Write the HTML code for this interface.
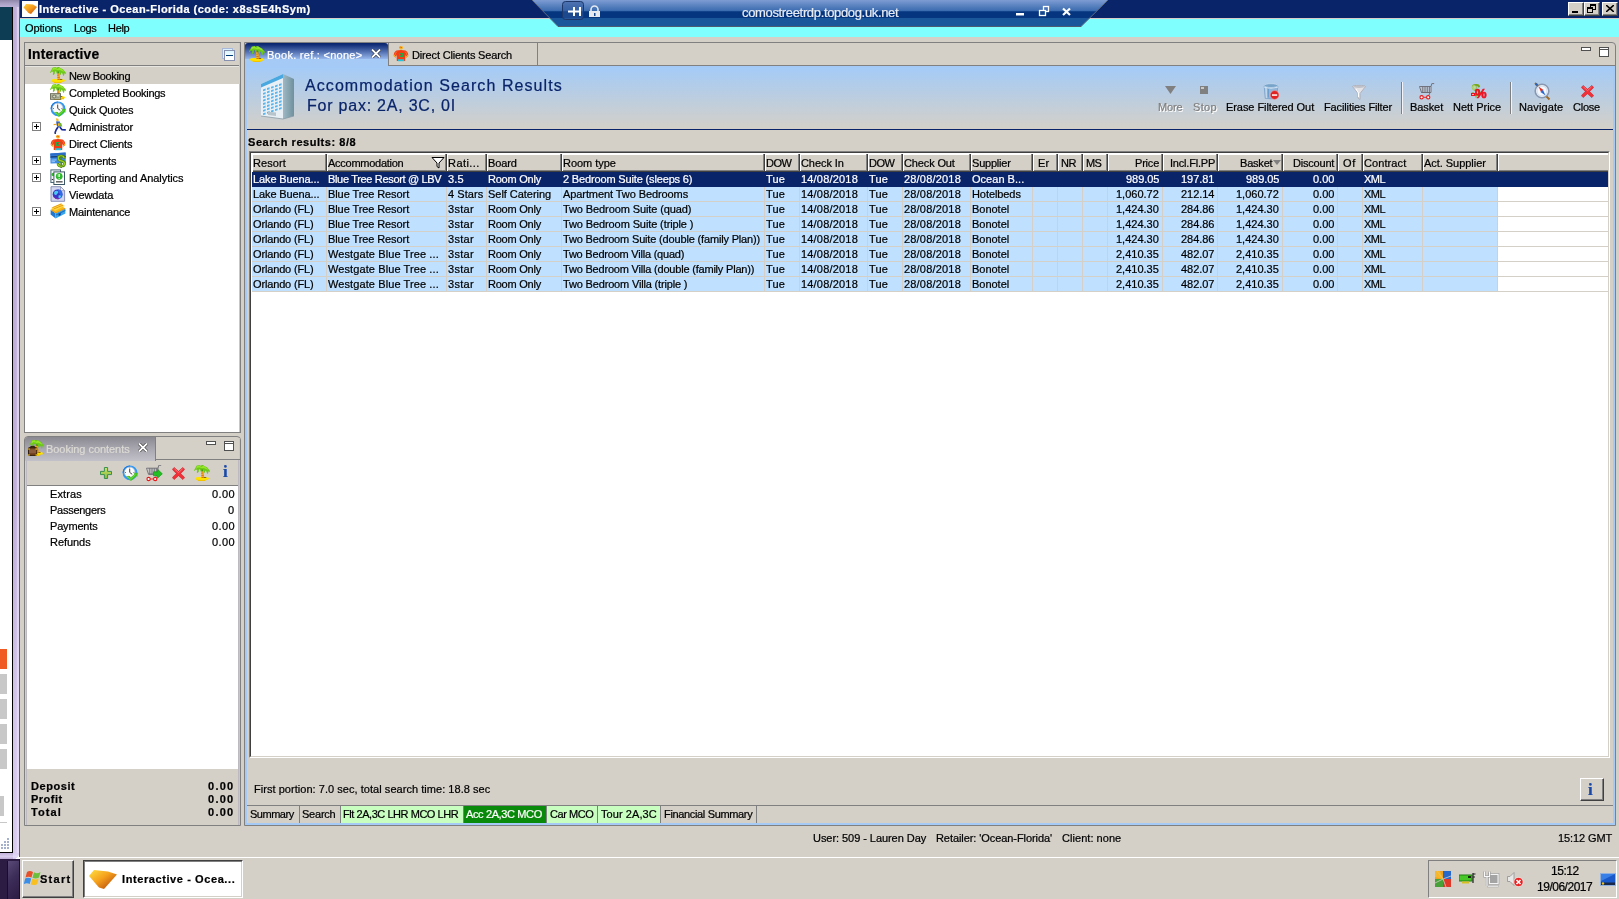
<!DOCTYPE html>
<html><head><meta charset="utf-8"><title>Interactive - Ocean-Florida</title>
<style>
html,body{margin:0;padding:0;}
body{width:1619px;height:899px;overflow:hidden;background:#d4d0c8;position:relative;font-family:"Liberation Sans",sans-serif;font-size:11px;color:#000;}
div,span.t,svg{position:absolute;box-sizing:border-box;}
span.t{white-space:pre;line-height:14px;font-size:11px;will-change:transform;-webkit-text-stroke:0.22px currentColor;}
.b{font-weight:bold;}
.w{color:#fff;}
</style></head><body>

<div style="left:0px;top:0px;width:20px;height:899px;background:#fff;"></div>
<div style="left:0px;top:7px;width:13px;height:33px;background:#0d3c55;"></div>
<div style="left:0px;top:6px;width:13px;height:1px;background:#000;"></div>
<div style="left:12px;top:6px;width:1px;height:847px;background:#000;"></div>
<div style="left:0px;top:852px;width:13px;height:1px;background:#000;"></div>
<div style="left:13px;top:0px;width:6px;height:859px;background:linear-gradient(90deg,#bdaad6 0%,#c3b2dc 55%,#e8e0f4 85%,#cfc2e4 100%);border-radius:0 0 6px 0;"></div>
<div style="left:0px;top:853px;width:19px;height:6px;background:linear-gradient(180deg,#c3b2dc,#d9cdee 60%,#bdaad6);border-radius:0 0 6px 0;"></div>
<div style="left:0px;top:0px;width:19px;height:7px;background:linear-gradient(180deg,#8f86a8,#a9a0c4 50%,#bdb0d6);"></div>
<div style="left:19px;top:0px;width:1px;height:857px;background:#5c5470;"></div>
<div style="left:0px;top:649px;width:7px;height:20px;background:#f05a23;"></div>
<div style="left:0px;top:674px;width:7px;height:20px;background:#c8c8c8;"></div>
<div style="left:0px;top:699px;width:7px;height:20px;background:#c8c8c8;"></div>
<div style="left:0px;top:724px;width:7px;height:20px;background:#c8c8c8;"></div>
<div style="left:0px;top:749px;width:7px;height:20px;background:#c8c8c8;"></div>
<div style="left:0px;top:796px;width:4px;height:20px;background:#c8c8c8;"></div>
<div style="left:7px;top:838px;width:2px;height:2px;background:#a4b0cc;"></div>
<div style="left:4px;top:841px;width:2px;height:2px;background:#a4b0cc;"></div>
<div style="left:7px;top:841px;width:2px;height:2px;background:#a4b0cc;"></div>
<div style="left:1px;top:844px;width:2px;height:2px;background:#a4b0cc;"></div>
<div style="left:4px;top:844px;width:2px;height:2px;background:#a4b0cc;"></div>
<div style="left:7px;top:844px;width:2px;height:2px;background:#a4b0cc;"></div>
<div style="left:1px;top:847px;width:2px;height:2px;background:#a4b0cc;"></div>
<div style="left:4px;top:847px;width:2px;height:2px;background:#a4b0cc;"></div>
<div style="left:7px;top:847px;width:2px;height:2px;background:#a4b0cc;"></div>
<div style="left:13px;top:500px;width:6px;height:359px;background:linear-gradient(180deg,rgba(255,255,255,0) 0%,rgba(236,226,255,0.450) 60%,rgba(236,226,255,0.550) 100%);border-radius:0 0 6px 0;"></div>
<div style="left:0px;top:822px;width:7px;height:1px;background:#c8c8c8;"></div>
<div style="left:20px;top:0px;width:1599px;height:18px;background:#0a246a;"></div>
<div style="left:22px;top:1px;width:16px;height:16px;background:#fff;"></div>
<svg style="left:22px;top:1px" width="16" height="16" viewBox="0 0 16 16"><defs><linearGradient id="gl" x1="0" y1="0" x2="1" y2="1"><stop offset="0" stop-color="#ffd23a"/><stop offset="0.5" stop-color="#f59a1c"/><stop offset="1" stop-color="#b8430c"/></linearGradient></defs><path d="M1.5 6.5 L4 3 L11 3.5 L15 6 L9 13 L6.5 12 Z" fill="url(#gl)"/></svg>
<span id="t1" class="t b w" style="top:2.19px;letter-spacing:0.457px;left:39.4px;">Interactive - Ocean-Florida (code: x8sSE4hSym)</span>
<div style="left:1568px;top:2px;width:16px;height:14px;background:#d4d0c8;border-top:1px solid #fff;border-left:1px solid #fff;border-right:1px solid #404040;border-bottom:1px solid #404040;box-shadow:inset -1px -1px 0 #808080;"><div style="left:3px;top:8px;width:6px;height:2px;background:#000"></div></div>
<div style="left:1584px;top:2px;width:16px;height:14px;background:#d4d0c8;border-top:1px solid #fff;border-left:1px solid #fff;border-right:1px solid #404040;border-bottom:1px solid #404040;box-shadow:inset -1px -1px 0 #808080;"><div style="left:5px;top:1px;width:6px;height:6px;border:1px solid #000;border-top-width:2px"></div><div style="left:2px;top:4px;width:6px;height:6px;border:1px solid #000;border-top-width:2px;background:#d4d0c8"></div></div>
<div style="left:1602px;top:2px;width:16px;height:14px;background:#d4d0c8;border-top:1px solid #fff;border-left:1px solid #fff;border-right:1px solid #404040;border-bottom:1px solid #404040;box-shadow:inset -1px -1px 0 #808080;"><svg style="left:3px;top:2px" width="8" height="7" viewBox="0 0 8 7"><path d="M0 0L8 7M8 0L0 7" stroke="#000" stroke-width="1.6"/></svg></div>
<div style="left:20px;top:18px;width:1599px;height:1px;background:#d8ccc8;"></div>
<div style="left:20px;top:19px;width:1599px;height:18px;background:#80ffff;"></div>
<span id="t2" class="t" style="top:21.19px;letter-spacing:-0.119px;left:25.4px;">Options</span>
<span id="t3" class="t" style="top:21.19px;letter-spacing:-0.388px;left:73.9px;">Logs</span>
<span id="t4" class="t" style="top:21.19px;letter-spacing:-0.309px;left:107.9px;">Help</span>
<svg style="left:528px;top:0" width="586" height="28" viewBox="0 0 586 28">
<defs><linearGradient id="rg" x1="0" y1="0" x2="0" y2="1">
<stop offset="0" stop-color="#7d9cd2"/><stop offset="0.40" stop-color="#3c6cb0"/><stop offset="0.445" stop-color="#06357f"/><stop offset="0.66" stop-color="#06357f"/><stop offset="0.68" stop-color="#19579a"/><stop offset="1" stop-color="#19579a"/></linearGradient></defs>
<path d="M4 0 L580 0 L553 26.5 L30 26.5 Z" fill="url(#rg)"/>
<path d="M4 0 L30 26.5 L553 26.5 L580 0" fill="none" stroke="#5a6a80" stroke-width="1"/>
<path d="M30 26.500 L553 26.500" stroke="#4e5c70" stroke-width="1"/>
<rect x="34.5" y="1.5" width="21" height="18" rx="3" fill="#30589a" fill-opacity="0.55" stroke="#1c3768"/>
<path d="M40 11.5 H46 M46 7 V16 M52 7 V16 M46 11.5 H52" stroke="#fff" stroke-width="2" fill="none"/>
<path d="M63 11 V9.500 a3.500 3.500 0 0 1 7 0 V11" stroke="#e6e8f0" stroke-width="1.600" fill="none"/>
<rect x="61" y="11" width="11" height="6" fill="#e6e8f0"/><rect x="66" y="13" width="1.500" height="3" fill="#1a4a90"/>
<rect x="488" y="13" width="8" height="2.5" fill="#fff"/>
<rect x="515.500" y="6.500" width="5" height="5" fill="none" stroke="#fff" stroke-width="1.300"/><rect x="511.500" y="10.500" width="6" height="5" fill="#16478f" stroke="#fff" stroke-width="1.3"/>
<path d="M535 8.500 L542 15 M542 8.500 L535 15" stroke="#fff" stroke-width="2.2"/>
</svg>
<span id="t5" class="t" style="top:4.50px;letter-spacing:-0.342px;font-size:13px;line-height:16px;left:742.0px;color:#e8ecf4;">comostreetrdp.topdog.uk.net</span>
<div style="left:24px;top:42px;width:217px;height:391px;border:1px solid #808080;background:#d4d0c8;"></div>
<div style="left:25px;top:65px;width:215px;height:1px;background:#808080;"></div>
<div style="left:25px;top:66px;width:215px;height:366px;background:#fff;"></div>
<div style="left:25px;top:66px;width:215px;height:1px;background:#e8e6e0;"></div>
<div style="left:239px;top:43px;width:1px;height:389px;background:#c8c6cc;"></div>
<span id="t6" class="t b" style="top:46.52px;letter-spacing:0.217px;font-size:13.8px;line-height:16px;left:28.4px;">Interactive</span>
<div style="left:222px;top:48px;width:11px;height:11px;border:1px solid #a8b8d8;background:#d8f0ff;"></div>
<div style="left:224px;top:50px;width:11px;height:11px;border:1px solid #8890b0;background:linear-gradient(180deg,#d8f4ff,#fff 70%);"><div style="left:1px;top:4px;width:7px;height:1.400px;background:#003c78"></div></div>
<div style="left:25px;top:67px;width:215px;height:17px;background:#d4d0c8;"></div>
<svg style="left:50px;top:67px" width="16" height="16" viewBox="0 0 16 16"><path d="M0.800 13.600 Q0.800 12.300 4 12 L11.500 12 Q15 12.300 15 13.600 Q15 14.800 12 15 L11 16 L4 16 L3.500 15 Q0.800 14.700 0.800 13.600 Z" fill="#ffe300"/><path d="M1.500 14.300 Q4 15 8 15 Q12 15 14.500 14.200 Q14 14.900 12 15 L11 16 L4 16 L3.500 15 Q2 14.900 1.500 14.300 Z" fill="#f2c200"/><path d="M6.900 4 L9 4 L10.300 13 L7.400 13 Z" fill="#f4b21c"/><path d="M7.100 6 L9.200 5.600 M7.300 8.300 L9.600 7.900 M7.400 10.600 L9.900 10.200 M7.500 12.600 L10.200 12.300" stroke="#d2620e" stroke-width="0.800"/><path d="M10 12.300 L12.500 12.300 L12 13 L10 13 Z" fill="#5a4a10"/><path d="M0 5.500 L1.200 3.200 L2.800 0.400 L6 0 L6.800 1 L7.600 0 L9.200 0 L10 1 L12.900 2.300 L15.100 4.700 L16 6.100 L15.700 6.900 L14.500 6.300 L14 8.800 L13.200 8.800 L12.400 6.600 L11.300 5.500 L10.800 7.700 L10 7.700 L9.300 5 L7.500 4.500 L6.800 6.700 L6 4.200 L4.900 4.500 L4.700 6.700 L3.600 8 L2.800 7.500 L3.300 4.800 L1.500 4.800 L0.400 6 Z" fill="#6cc81a"/><path d="M3 1 L6 0.500 L7 2 L9.500 0.700 L12.500 2.800 L14.500 5 L12 4 L10 3 L8 3.200 L6 2.500 L4 2.500 L2 4 Z" fill="#96e628"/><path d="M7.200 4.500 L8.800 4.200 L9.300 6.500 L7.800 6.300 Z" fill="#3e9e12"/></svg>
<span id="t7" class="t" style="top:69.19px;letter-spacing:-0.332px;left:69.4px;">New Booking</span>
<svg style="left:50px;top:84px" width="16" height="16" viewBox="0 0 16 16"><path d="M0.800 13.600 Q0.800 12.300 4 12 L11.500 12 Q15 12.300 15 13.600 Q15 14.800 12 15 L11 16 L4 16 L3.500 15 Q0.800 14.700 0.800 13.600 Z" fill="#ffe300"/><path d="M1.500 14.300 Q4 15 8 15 Q12 15 14.500 14.200 Q14 14.900 12 15 L11 16 L4 16 L3.500 15 Q2 14.900 1.500 14.300 Z" fill="#f2c200"/><path d="M6.900 4 L9 4 L10.300 13 L7.400 13 Z" fill="#f4b21c"/><path d="M7.100 6 L9.200 5.600 M7.300 8.300 L9.600 7.900 M7.400 10.600 L9.900 10.200 M7.500 12.600 L10.200 12.300" stroke="#d2620e" stroke-width="0.800"/><path d="M10 12.300 L12.500 12.300 L12 13 L10 13 Z" fill="#5a4a10"/><path d="M0 5.500 L1.200 3.200 L2.800 0.400 L6 0 L6.800 1 L7.600 0 L9.200 0 L10 1 L12.900 2.300 L15.100 4.700 L16 6.100 L15.700 6.900 L14.500 6.300 L14 8.800 L13.200 8.800 L12.400 6.600 L11.300 5.500 L10.800 7.700 L10 7.700 L9.300 5 L7.500 4.500 L6.800 6.700 L6 4.200 L4.900 4.500 L4.700 6.700 L3.600 8 L2.800 7.500 L3.300 4.800 L1.500 4.800 L0.400 6 Z" fill="#6cc81a"/><path d="M3 1 L6 0.500 L7 2 L9.500 0.700 L12.500 2.800 L14.500 5 L12 4 L10 3 L8 3.200 L6 2.500 L4 2.500 L2 4 Z" fill="#96e628"/><path d="M7.200 4.500 L8.800 4.200 L9.300 6.500 L7.800 6.300 Z" fill="#3e9e12"/><rect x="0.400" y="9.700" width="10.200" height="5.600" fill="#c8cbb0" stroke="#5a5a48" stroke-width="0.800"/><rect x="1.300" y="10.600" width="8.400" height="3.800" fill="#9aa088"/><ellipse cx="4.200" cy="12.500" rx="1.500" ry="1.500" fill="#d8dcc8" stroke="#58584a" stroke-width="0.700"/><rect x="6.800" y="11.400" width="2.200" height="0.900" fill="#ecf0dc"/><path d="M10.800 13.500 H14 V15.300 H10.800 Z" fill="#f2c200"/></svg>
<span id="t8" class="t" style="top:86.19px;letter-spacing:-0.289px;left:69.4px;">Completed Bookings</span>
<svg style="left:50px;top:101px" width="16" height="16" viewBox="0 0 16 16"><path d="M8 0.400 A7.400 7.400 0 1 0 8 15.200 A7.400 7.400 0 1 0 8 0.400 Z" fill="#2f98f4"/><path d="M8 0.400 A7.400 7.400 0 0 0 0.600 7.800 L3 7.800 A5 5 0 0 1 8 2.800 Z" fill="#1a7ae0"/><circle cx="7.700" cy="7.300" r="5.300" fill="#fbfbfb" stroke="#b8c0cc" stroke-width="0.700"/><g fill="#404040"><rect x="7.400" y="2.600" width="0.700" height="1"/><rect x="7.400" y="11" width="0.700" height="1"/><rect x="3" y="7" width="1" height="0.700"/><rect x="11.400" y="7" width="1" height="0.700"/></g><path d="M7.700 4 V7.400 L10.200 9.300" stroke="#303030" stroke-width="0.900" fill="none"/><path d="M4.200 11.600 L6.200 10.800 L8.600 12.600 L12.300 9.200 L11.600 8.400 L15.800 7.600 L15.300 12 L14.300 11 L9 16 Z" fill="#44c41c"/><path d="M5.200 11.700 L8.600 14 L13.500 9.300" stroke="#8ce860" stroke-width="0.700" fill="none"/></svg>
<span id="t9" class="t" style="top:103.19px;letter-spacing:-0.195px;left:69.4px;">Quick Quotes</span>
<svg style="left:50px;top:118px" width="16" height="16" viewBox="0 0 16 16"><path d="M5.800 0.300 L8.300 0.800 L8.800 2.800 L6.600 3.200 Z" fill="#f4c030"/><path d="M6.200 3.200 L9.800 3.600 L11 8.200 L8 9.400 L6.500 7 Z" fill="#3860c0"/><path d="M8.600 4.200 L11.300 5.200 L12.300 8.500 L10.300 8.800 Z" fill="#70b838"/><path d="M8 5 L9.800 6 L9.500 8.500 L8 7.800 Z" fill="#f0b020"/><path d="M3.600 6.600 L6.400 6.300" stroke="#f0a818" stroke-width="1.100"/><path d="M8 9 L6.200 11.800 L5 14.800 M9.800 9 L11.800 11.600 L15.800 11.800" stroke="#1c2c98" stroke-width="1.700" fill="none" stroke-linejoin="round"/><path d="M4.300 15 L6 15.400" stroke="#101850" stroke-width="1.200"/></svg>
<span id="t10" class="t" style="top:120.19px;letter-spacing:-0.050px;left:69.4px;">Administrator</span>
<div style="left:32px;top:122px;width:9px;height:9px;border:1px solid #808080;background:#fff;"><div style="left:1px;top:3px;width:5px;height:1px;background:#000"></div><div style="left:3px;top:1px;width:1px;height:5px;background:#000"></div></div>
<svg style="left:50px;top:135px" width="16" height="16" viewBox="0 0 16 16"><path d="M6.200 0.600 Q8 -0.400 9.600 0.600 Q10.400 2 9.200 3.200 Q8 4 6.800 3.200 Q5.600 2 6.200 0.600 Z" fill="#f8b418"/><path d="M6.600 1.400 Q8 0.800 9 1.800" stroke="#e05010" stroke-width="0.700" fill="none"/><path d="M3.500 4.600 Q8 3.400 12.500 4.600 Q15.600 6.200 15.200 10 L13.400 11.800 L12.400 8.600 L12.200 15 L3.800 15 L3.600 8.600 L2.600 11.800 L0.800 10 Q0.400 6.200 3.500 4.600 Z" fill="#f23c14"/><path d="M0.800 10 L2.600 11.800 L3 10.400 L1.300 8.800 Z M15.200 10 L13.400 11.800 L13 10.400 L14.700 8.800 Z" fill="#f8c020"/><path d="M4 5.500 Q2 7 2 9 M12 5.500 Q14 7 14 9" stroke="#f87a30" stroke-width="0.900" fill="none"/><rect x="6" y="7" width="4.200" height="4" fill="#28a848"/><rect x="7" y="8" width="2" height="1.400" fill="#e83018"/><rect x="5" y="13.200" width="6.200" height="2" fill="#28c0d8"/></svg>
<span id="t11" class="t" style="top:137.19px;letter-spacing:-0.155px;left:69.4px;">Direct Clients</span>
<svg style="left:50px;top:152px" width="16" height="16" viewBox="0 0 16 16"><path d="M0.300 1.400 L15.600 0.600 L15.800 11 L0.500 11.600 Z" fill="#3a8ae4"/><path d="M0.300 1.400 L15.600 0.600 L15.650 3 L0.350 3.800 Z" fill="#2a6cc8"/><path d="M0.350 4.200 L15.650 3.400 L15.700 5 L0.400 5.800 Z" fill="#16407e"/><path d="M1.500 8.200 L6.500 7.900 M1.500 9.800 L5 9.600" stroke="#a8d0f8" stroke-width="0.900"/><text x="11.300" y="15.300" font-size="16" font-weight="bold" text-anchor="middle" fill="#9cd420" stroke="#4c7c10" stroke-width="0.700" font-family="Liberation Sans, sans-serif">$</text></svg>
<span id="t12" class="t" style="top:154.19px;letter-spacing:-0.216px;left:69.4px;">Payments</span>
<div style="left:32px;top:156px;width:9px;height:9px;border:1px solid #808080;background:#fff;"><div style="left:1px;top:3px;width:5px;height:1px;background:#000"></div><div style="left:3px;top:1px;width:1px;height:5px;background:#000"></div></div>
<svg style="left:50px;top:169px" width="16" height="16" viewBox="0 0 16 16"><rect x="0.900" y="0.900" width="9.600" height="12.600" fill="#f4f7fa" stroke="#4a6878" stroke-width="1"/><circle cx="3.200" cy="5.500" r="1.800" fill="#38b838"/><rect x="1.800" y="10" width="1.500" height="1" fill="#303030"/><rect x="3.900" y="2.900" width="10.600" height="12.600" fill="#fff" stroke="#3c5868" stroke-width="1"/><circle cx="9.200" cy="7.300" r="3.400" fill="#2cba2c"/><circle cx="8.600" cy="6.500" r="1.800" fill="#68dc58" fill-opacity="0.600"/><path d="M9.200 5 V8 M9.200 9 V9.800" stroke="#fff" stroke-width="1.200"/><rect x="6" y="12.300" width="6.600" height="1.100" fill="#282828"/></svg>
<span id="t13" class="t" style="top:171.19px;letter-spacing:-0.045px;left:69.4px;">Reporting and Analytics</span>
<div style="left:32px;top:173px;width:9px;height:9px;border:1px solid #808080;background:#fff;"><div style="left:1px;top:3px;width:5px;height:1px;background:#000"></div><div style="left:3px;top:1px;width:1px;height:5px;background:#000"></div></div>
<svg style="left:50px;top:186px" width="16" height="16" viewBox="0 0 16 16"><path d="M1 0.700 H10.500 L14.600 4.700 V15.300 H1 Z" fill="#d2d6ee" stroke="#8088b4" stroke-width="0.900"/><path d="M10.500 0.700 V4.700 H14.600 Z" fill="#f4f6fc" stroke="#8088b4" stroke-width="0.700"/><circle cx="7.600" cy="8.300" r="4.900" fill="#3a34c8"/><path d="M7.600 3.400 A4.900 4.900 0 0 1 12.500 8.300 A4.900 4.900 0 0 1 9 13 Q11 10 9.500 7.500 Q8.500 5 7.600 3.400 Z" fill="#2c6ce8"/><path d="M4.200 6 Q6 4.200 8 5.200 Q9 6.500 7.500 7.600 Q6.500 9.500 5 9 Q3.600 8 4.200 6 Z" fill="#48c8f0"/><path d="M8.500 9.500 Q10.500 8.800 11 10.400 Q10 12.300 8.600 12 Z" fill="#58d0f0"/><path d="M3.300 10.500 Q5.500 13.500 9 12.800" stroke="#7a30b0" stroke-width="1" fill="none"/></svg>
<span id="t14" class="t" style="top:188.19px;letter-spacing:-0.093px;left:69.4px;">Viewdata</span>
<svg style="left:50px;top:203px" width="16" height="16" viewBox="0 0 16 16"><path d="M0.600 6.800 L5.600 10.200 L5.600 15.600 L0.600 11.600 Z" fill="#1e78d4"/><path d="M5.600 10.200 L15.400 5.600 L15.400 10.600 L5.600 15.600 Z" fill="#38a4ec"/><path d="M0.600 6.800 L10.400 2.200 L15.400 5.600 L5.600 10.200 Z" fill="#f8b818"/><path d="M1 5 L10.800 0.500 L14.800 3 L5 7.800 Z" fill="#ffd840"/><path d="M2.400 4.600 L11.600 0.900 M3.600 6 L13 2.200 M1.600 7.300 L6 9.800 L15 5.600" stroke="#e08c10" stroke-width="0.800" fill="none"/><path d="M6 12 L15.400 7.400" stroke="#1464b8" stroke-width="0.900"/><path d="M8.600 11 L10.600 10 L10.600 12 L8.600 13 Z" fill="#0c3c88"/></svg>
<span id="t15" class="t" style="top:205.19px;letter-spacing:-0.160px;left:69.4px;">Maintenance</span>
<div style="left:32px;top:207px;width:9px;height:9px;border:1px solid #808080;background:#fff;"><div style="left:1px;top:3px;width:5px;height:1px;background:#000"></div><div style="left:3px;top:1px;width:1px;height:5px;background:#000"></div></div>
<div style="left:24px;top:436px;width:217px;height:390px;border:1px solid #808080;background:#d4d0c8;border-radius:4px 4px 0 0;"></div>
<div style="left:239px;top:438px;width:1px;height:387px;background:#c8c6cc;"></div>
<div style="left:25px;top:437px;width:131px;height:24px;background:linear-gradient(180deg,#8a8890 0%,#a6a4ac 45%,#c2c0c8 100%);border-radius:3px 0 0 0;border-right:1px solid #808080;"></div>
<div style="left:155px;top:459px;width:85px;height:1px;background:#808080;"></div>
<svg style="left:28px;top:440px" width="16" height="16" viewBox="0 0 16 16"><g transform="translate(1.500,-0.200) scale(0.900,1)"><path d="M0.800 13.600 Q0.800 12.300 4 12 L11.500 12 Q15 12.300 15 13.600 Q15 14.800 12 15 L11 16 L4 16 L3.500 15 Q0.800 14.700 0.800 13.600 Z" fill="#ffe300"/><path d="M1.500 14.300 Q4 15 8 15 Q12 15 14.500 14.200 Q14 14.900 12 15 L11 16 L4 16 L3.500 15 Q2 14.900 1.500 14.300 Z" fill="#f2c200"/><path d="M6.900 4 L9 4 L10.300 13 L7.400 13 Z" fill="#f4b21c"/><path d="M7.100 6 L9.200 5.600 M7.300 8.300 L9.600 7.900 M7.400 10.600 L9.900 10.200 M7.500 12.600 L10.200 12.300" stroke="#d2620e" stroke-width="0.800"/><path d="M10 12.300 L12.500 12.300 L12 13 L10 13 Z" fill="#5a4a10"/><path d="M0 5.500 L1.200 3.200 L2.800 0.400 L6 0 L6.800 1 L7.600 0 L9.200 0 L10 1 L12.900 2.300 L15.100 4.700 L16 6.100 L15.700 6.900 L14.500 6.300 L14 8.800 L13.200 8.800 L12.400 6.600 L11.300 5.500 L10.800 7.700 L10 7.700 L9.300 5 L7.500 4.500 L6.800 6.700 L6 4.200 L4.900 4.500 L4.700 6.700 L3.600 8 L2.800 7.500 L3.300 4.800 L1.500 4.800 L0.400 6 Z" fill="#6cc81a"/><path d="M3 1 L6 0.500 L7 2 L9.500 0.700 L12.500 2.800 L14.500 5 L12 4 L10 3 L8 3.200 L6 2.500 L4 2.500 L2 4 Z" fill="#96e628"/><path d="M7.200 4.500 L8.800 4.200 L9.300 6.500 L7.800 6.300 Z" fill="#3e9e12"/></g><rect x="0.500" y="7.600" width="8.200" height="8" rx="0.800" fill="#6a3c1c" stroke="#2a1404" stroke-width="0.900"/><path d="M2.800 7.600 V6.400 H6.400 V7.600" stroke="#2a1404" stroke-width="1" fill="none"/><rect x="1" y="9.300" width="7.200" height="4" fill="#8a5a3c"/><rect x="0.300" y="8.400" width="1.300" height="1.300" fill="#f8d020"/><rect x="7.600" y="8.400" width="1.300" height="1.300" fill="#f8d020"/><rect x="0.300" y="14.300" width="1.300" height="1.300" fill="#f8d020"/><rect x="7.600" y="14.300" width="1.300" height="1.300" fill="#f8d020"/></svg>
<span id="t16" class="t" style="top:442.19px;letter-spacing:-0.047px;left:46.4px;color:#dcdad4;">Booking contents</span>
<svg style="left:138px;top:443px" width="10" height="9" viewBox="0 0 10 9"><path d="M1 0.500 L9 8.500 M9 0.500 L1 8.500" stroke="#404040" stroke-width="3.200"/><path d="M1 0.500 L9 8.500 M9 0.500 L1 8.500" stroke="#fff" stroke-width="1.800"/></svg>
<div style="left:206px;top:441px;width:10px;height:4px;border:1px solid #505050;background:#fff;"></div>
<div style="left:224px;top:441px;width:10px;height:10px;border:1px solid #505050;background:#fff;"><div style="left:0;top:1px;width:8px;height:1px;background:#505050"></div></div>
<div style="left:26px;top:460px;width:213px;height:365px;border-left:1px solid #bcbac0;border-right:1px solid #bcbac0;"></div>
<div style="left:27px;top:485px;width:211px;height:1px;background:#808080;"></div>
<div style="left:27px;top:486px;width:211px;height:283px;background:#fff;"></div>
<svg style="left:100px;top:467px" width="12" height="12" viewBox="0 0 12 12"><defs><linearGradient id="pg" x1="0" y1="0" x2="0" y2="1"><stop offset="0" stop-color="#cce468"/><stop offset="1" stop-color="#86b83c"/></linearGradient></defs><path d="M4.400 0.500 H7.600 V4.400 H11.500 V7.600 H7.600 V11.500 H4.400 V7.600 H0.500 V4.400 H4.400 Z" fill="url(#pg)" stroke="#3a9050"/></svg>
<svg style="left:122px;top:465px" width="16" height="16" viewBox="0 0 16 16"><path d="M8 0.400 A7.400 7.400 0 1 0 8 15.200 A7.400 7.400 0 1 0 8 0.400 Z" fill="#2f98f4"/><path d="M8 0.400 A7.400 7.400 0 0 0 0.600 7.800 L3 7.800 A5 5 0 0 1 8 2.800 Z" fill="#1a7ae0"/><circle cx="7.700" cy="7.300" r="5.300" fill="#fbfbfb" stroke="#b8c0cc" stroke-width="0.700"/><g fill="#404040"><rect x="7.400" y="2.600" width="0.700" height="1"/><rect x="7.400" y="11" width="0.700" height="1"/><rect x="3" y="7" width="1" height="0.700"/><rect x="11.400" y="7" width="1" height="0.700"/></g><path d="M7.700 4 V7.400 L10.200 9.300" stroke="#303030" stroke-width="0.900" fill="none"/><path d="M4.200 11.600 L6.200 10.800 L8.600 12.600 L12.300 9.200 L11.600 8.400 L15.800 7.600 L15.300 12 L14.300 11 L9 16 Z" fill="#44c41c"/><path d="M5.200 11.700 L8.600 14 L13.500 9.300" stroke="#8ce860" stroke-width="0.700" fill="none"/></svg>
<svg style="left:146px;top:465px" width="17" height="17" viewBox="0 0 17 17"><g transform="translate(0,-0.300)"><path d="M0.500 3.500 H12 V9.500 H2.500 Z" fill="#e8e8ec" fill-opacity="0.500" stroke="#6a6a72" stroke-width="0.900"/><path d="M3.300 3.500 V9.500 M5.100 3.500 V9.500 M6.900 3.500 V9.500 M8.700 3.500 V9.500 M10.400 3.500 V9.500 M12 3.500 L12.800 0.600 H15.200 M2.500 9.500 L11 9.500 L10 12" stroke="#6a6a72" stroke-width="0.900" fill="none"/><path d="M4.200 14.300 H8" stroke="#e81818" stroke-width="0.900"/><circle cx="2.600" cy="14.300" r="1.650" fill="#fff" stroke="#e81818" stroke-width="1.100"/><circle cx="9.200" cy="14.300" r="1.650" fill="#fff" stroke="#e81818" stroke-width="1.100"/></g><path d="M7.500 6.800 H11.500 V4.300 L16.300 8.800 L11.500 13.300 V10.800 H7.500 Z" fill="#22c022" stroke="#108a10" stroke-width="0.600"/></svg>
<svg style="left:172px;top:467px" width="13" height="13" viewBox="0 0 13 13"><path d="M2.200 0.400 L6.500 4.300 L10.800 0.400 L12.700 2.400 L8.700 6.500 L12.700 10.600 L10.800 12.600 L6.500 8.700 L2.200 12.600 L0.300 10.600 L4.300 6.500 L0.300 2.400 Z" fill="#f23038" stroke="#c01820" stroke-width="0.500"/><path d="M2.400 1.800 L6.500 5.600 L10.600 1.800" stroke="#fa7880" stroke-width="0.900" fill="none"/></svg>
<svg style="left:194px;top:465px" width="16" height="16" viewBox="0 0 16 16"><path d="M0.800 13.600 Q0.800 12.300 4 12 L11.500 12 Q15 12.300 15 13.600 Q15 14.800 12 15 L11 16 L4 16 L3.500 15 Q0.800 14.700 0.800 13.600 Z" fill="#ffe300"/><path d="M1.500 14.300 Q4 15 8 15 Q12 15 14.500 14.200 Q14 14.900 12 15 L11 16 L4 16 L3.500 15 Q2 14.900 1.500 14.300 Z" fill="#f2c200"/><path d="M6.900 4 L9 4 L10.300 13 L7.400 13 Z" fill="#f4b21c"/><path d="M7.100 6 L9.200 5.600 M7.300 8.300 L9.600 7.900 M7.400 10.600 L9.900 10.200 M7.500 12.600 L10.200 12.300" stroke="#d2620e" stroke-width="0.800"/><path d="M10 12.300 L12.500 12.300 L12 13 L10 13 Z" fill="#5a4a10"/><path d="M0 5.500 L1.200 3.200 L2.800 0.400 L6 0 L6.800 1 L7.600 0 L9.200 0 L10 1 L12.900 2.300 L15.100 4.700 L16 6.100 L15.700 6.900 L14.500 6.300 L14 8.800 L13.200 8.800 L12.400 6.600 L11.300 5.500 L10.800 7.700 L10 7.700 L9.300 5 L7.500 4.500 L6.800 6.700 L6 4.200 L4.900 4.500 L4.700 6.700 L3.600 8 L2.800 7.500 L3.300 4.800 L1.500 4.800 L0.400 6 Z" fill="#6cc81a"/><path d="M3 1 L6 0.500 L7 2 L9.500 0.700 L12.500 2.800 L14.500 5 L12 4 L10 3 L8 3.200 L6 2.500 L4 2.500 L2 4 Z" fill="#96e628"/><path d="M7.200 4.500 L8.800 4.200 L9.300 6.500 L7.800 6.300 Z" fill="#3e9e12"/></svg>
<span id="t17" class="t" style="top:463.11px;letter-spacing:0.000px;font-size:17px;line-height:18px;left:222.9px;font-family:'Liberation Serif',serif;font-weight:bold;color:#1848a8;">i</span>
<span id="t18" class="t" style="top:487.19px;letter-spacing:0.103px;left:50.4px;">Extras</span>
<span id="t19" class="t" style="top:487.19px;letter-spacing:0.430px;left:212.4px;">0.00</span>
<span id="t20" class="t" style="top:503.19px;letter-spacing:-0.266px;left:50.4px;">Passengers</span>
<span id="t21" class="t" style="top:503.19px;letter-spacing:0.000px;left:228.4px;">0</span>
<span id="t22" class="t" style="top:519.19px;letter-spacing:-0.173px;left:50.4px;">Payments</span>
<span id="t23" class="t" style="top:519.19px;letter-spacing:0.430px;left:212.4px;">0.00</span>
<span id="t24" class="t" style="top:535.19px;letter-spacing:-0.046px;left:50.4px;">Refunds</span>
<span id="t25" class="t" style="top:535.19px;letter-spacing:0.430px;left:212.4px;">0.00</span>
<span id="t26" class="t b" style="top:779.19px;letter-spacing:0.560px;left:31.4px;">Deposit</span>
<span id="t27" class="t b" style="top:779.19px;letter-spacing:1.264px;left:207.9px;">0.00</span>
<span id="t28" class="t b" style="top:792.19px;letter-spacing:0.494px;left:31.4px;">Profit</span>
<span id="t29" class="t b" style="top:792.19px;letter-spacing:1.264px;left:207.9px;">0.00</span>
<span id="t30" class="t b" style="top:805.19px;letter-spacing:1.058px;left:31.4px;">Total</span>
<span id="t31" class="t b" style="top:805.19px;letter-spacing:1.264px;left:207.9px;">0.00</span>
<div style="left:244px;top:42px;width:1372px;height:784px;border:1px solid #808080;background:#d4d0c8;border-radius:0 4px 0 0;"></div>
<div style="left:245px;top:66px;width:2px;height:759px;background:#a6caf6;"></div>
<div style="left:1613px;top:66px;width:2px;height:759px;background:#a6caf6;"></div>
<div style="left:245px;top:823px;width:1370px;height:2px;background:#a6caf6;"></div>
<div style="left:245px;top:43px;width:143px;height:23px;background:linear-gradient(180deg,#0a246a 0px,#14307a 2px,#96b6ec 16px,#a6caf6 16.500px,#a6caf6 23px);border-radius:3px 3px 0 0;"></div>
<div style="left:388px;top:65px;width:1227px;height:1px;background:#808080;"></div>
<div style="left:388px;top:43px;width:1px;height:22px;background:#808080;"></div>
<div style="left:537px;top:43px;width:1px;height:22px;background:#808080;"></div>
<svg style="left:249px;top:46px" width="16" height="16" viewBox="0 0 16 16"><path d="M0.800 13.600 Q0.800 12.300 4 12 L11.500 12 Q15 12.300 15 13.600 Q15 14.800 12 15 L11 16 L4 16 L3.500 15 Q0.800 14.700 0.800 13.600 Z" fill="#ffe300"/><path d="M1.500 14.300 Q4 15 8 15 Q12 15 14.500 14.200 Q14 14.900 12 15 L11 16 L4 16 L3.500 15 Q2 14.900 1.500 14.300 Z" fill="#f2c200"/><path d="M6.900 4 L9 4 L10.300 13 L7.400 13 Z" fill="#f4b21c"/><path d="M7.100 6 L9.200 5.600 M7.300 8.300 L9.600 7.900 M7.400 10.600 L9.900 10.200 M7.500 12.600 L10.200 12.300" stroke="#d2620e" stroke-width="0.800"/><path d="M10 12.300 L12.500 12.300 L12 13 L10 13 Z" fill="#5a4a10"/><path d="M0 5.500 L1.200 3.200 L2.800 0.400 L6 0 L6.800 1 L7.600 0 L9.200 0 L10 1 L12.900 2.300 L15.100 4.700 L16 6.100 L15.700 6.900 L14.500 6.300 L14 8.800 L13.200 8.800 L12.400 6.600 L11.300 5.500 L10.800 7.700 L10 7.700 L9.300 5 L7.500 4.500 L6.800 6.700 L6 4.200 L4.900 4.500 L4.700 6.700 L3.600 8 L2.800 7.500 L3.300 4.800 L1.500 4.800 L0.400 6 Z" fill="#6cc81a"/><path d="M3 1 L6 0.500 L7 2 L9.500 0.700 L12.500 2.800 L14.500 5 L12 4 L10 3 L8 3.200 L6 2.500 L4 2.500 L2 4 Z" fill="#96e628"/><path d="M7.200 4.500 L8.800 4.200 L9.300 6.500 L7.800 6.300 Z" fill="#3e9e12"/></svg>
<span id="t32" class="t" style="top:48.19px;letter-spacing:0.275px;left:267.4px;color:#fff;">Book. ref.: &lt;none&gt;</span>
<svg style="left:371px;top:49px" width="10" height="9" viewBox="0 0 10 9"><path d="M1 0.500 L9 8.500 M9 0.500 L1 8.500" stroke="#303848" stroke-width="3.200"/><path d="M1 0.500 L9 8.500 M9 0.500 L1 8.500" stroke="#fff" stroke-width="1.800"/></svg>
<svg style="left:393px;top:46px" width="16" height="16" viewBox="0 0 16 16"><path d="M6.200 0.600 Q8 -0.400 9.600 0.600 Q10.400 2 9.200 3.200 Q8 4 6.800 3.200 Q5.600 2 6.200 0.600 Z" fill="#f8b418"/><path d="M6.600 1.400 Q8 0.800 9 1.800" stroke="#e05010" stroke-width="0.700" fill="none"/><path d="M3.500 4.600 Q8 3.400 12.500 4.600 Q15.600 6.200 15.200 10 L13.400 11.800 L12.400 8.600 L12.200 15 L3.800 15 L3.600 8.600 L2.600 11.800 L0.800 10 Q0.400 6.200 3.500 4.600 Z" fill="#f23c14"/><path d="M0.800 10 L2.600 11.800 L3 10.400 L1.300 8.800 Z M15.200 10 L13.400 11.800 L13 10.400 L14.700 8.800 Z" fill="#f8c020"/><path d="M4 5.500 Q2 7 2 9 M12 5.500 Q14 7 14 9" stroke="#f87a30" stroke-width="0.900" fill="none"/><rect x="6" y="7" width="4.200" height="4" fill="#28a848"/><rect x="7" y="8" width="2" height="1.400" fill="#e83018"/><rect x="5" y="13.200" width="6.200" height="2" fill="#28c0d8"/></svg>
<span id="t33" class="t" style="top:48.19px;letter-spacing:-0.156px;left:411.9px;">Direct Clients Search</span>
<div style="left:1581px;top:47px;width:10px;height:4px;border:1px solid #505050;background:#fff;"></div>
<div style="left:1599px;top:47px;width:10px;height:10px;border:1px solid #505050;background:#fff;"><div style="left:0;top:1px;width:8px;height:1px;background:#505050"></div></div>
<div style="left:247px;top:66px;width:1366px;height:63px;background:linear-gradient(180deg,#a3cbf8 0%,#d4d0c8 100%);"></div>
<div style="left:247px;top:129px;width:1366px;height:1px;background:#0a246a;"></div>
<svg style="left:258px;top:72px" width="38" height="50" viewBox="0 0 38 50">
<defs><linearGradient id="bs" x1="0" y1="0" x2="1" y2="0"><stop offset="0" stop-color="#9fb8c4"/><stop offset="1" stop-color="#6f909e"/></linearGradient></defs>
<path d="M3 12 L25 2 L25 47 L3 44 Z" fill="#e8f0f6"/>
<path d="M25 2 L36 7 L36 44 L25 47 Z" fill="url(#bs)"/>
<path d="M3 12 L25 2 L25 6 L3 15.500 Z" fill="#49a8e0"/>
<g fill="#58b4ec"><path d="M5 17.5 l2.600 -0.900 v2 l-2.600 0.700 Z"/><path d="M9 16.1 l2.600 -0.900 v2 l-2.600 0.700 Z"/><path d="M13 14.8 l2.600 -0.900 v2 l-2.600 0.700 Z"/><path d="M17 13.4 l2.600 -0.900 v2 l-2.600 0.700 Z"/><path d="M21 12.1 l2.600 -0.900 v2 l-2.600 0.700 Z"/><path d="M5 20.9 l2.600 -0.900 v2 l-2.600 0.700 Z"/><path d="M9 19.5 l2.600 -0.900 v2 l-2.600 0.700 Z"/><path d="M13 18.2 l2.600 -0.900 v2 l-2.600 0.700 Z"/><path d="M17 16.8 l2.600 -0.900 v2 l-2.600 0.700 Z"/><path d="M21 15.5 l2.600 -0.900 v2 l-2.600 0.700 Z"/><path d="M5 24.3 l2.600 -0.900 v2 l-2.600 0.700 Z"/><path d="M9 22.9 l2.600 -0.900 v2 l-2.600 0.700 Z"/><path d="M13 21.6 l2.600 -0.900 v2 l-2.600 0.700 Z"/><path d="M17 20.2 l2.600 -0.900 v2 l-2.600 0.700 Z"/><path d="M21 18.9 l2.600 -0.900 v2 l-2.600 0.700 Z"/><path d="M5 27.7 l2.600 -0.900 v2 l-2.600 0.700 Z"/><path d="M9 26.3 l2.600 -0.900 v2 l-2.600 0.700 Z"/><path d="M13 25.0 l2.600 -0.900 v2 l-2.600 0.700 Z"/><path d="M17 23.6 l2.600 -0.900 v2 l-2.600 0.700 Z"/><path d="M21 22.3 l2.600 -0.900 v2 l-2.600 0.700 Z"/><path d="M5 31.1 l2.600 -0.900 v2 l-2.600 0.700 Z"/><path d="M9 29.8 l2.600 -0.900 v2 l-2.600 0.700 Z"/><path d="M13 28.4 l2.600 -0.900 v2 l-2.600 0.700 Z"/><path d="M17 27.1 l2.600 -0.900 v2 l-2.600 0.700 Z"/><path d="M21 25.7 l2.600 -0.900 v2 l-2.600 0.700 Z"/><path d="M5 34.5 l2.600 -0.900 v2 l-2.600 0.700 Z"/><path d="M9 33.1 l2.600 -0.900 v2 l-2.600 0.700 Z"/><path d="M13 31.8 l2.600 -0.900 v2 l-2.600 0.700 Z"/><path d="M17 30.4 l2.600 -0.900 v2 l-2.600 0.700 Z"/><path d="M21 29.1 l2.600 -0.900 v2 l-2.600 0.700 Z"/><path d="M5 37.9 l2.600 -0.900 v2 l-2.600 0.700 Z"/><path d="M9 36.5 l2.600 -0.900 v2 l-2.600 0.700 Z"/><path d="M13 35.2 l2.600 -0.900 v2 l-2.600 0.700 Z"/><path d="M17 33.8 l2.600 -0.900 v2 l-2.600 0.700 Z"/><path d="M21 32.5 l2.600 -0.900 v2 l-2.600 0.700 Z"/><path d="M5 41.3 l2.600 -0.900 v2 l-2.600 0.700 Z"/><path d="M9 39.9 l2.600 -0.900 v2 l-2.600 0.700 Z"/><path d="M13 38.6 l2.600 -0.900 v2 l-2.600 0.700 Z"/><path d="M17 37.2 l2.600 -0.900 v2 l-2.600 0.700 Z"/><path d="M21 35.9 l2.600 -0.900 v2 l-2.600 0.700 Z"/></g>
<path d="M10 43 L18 44 L18 40.500 L10 39.800 Z" fill="#b8c4cc"/>
<path d="M3 44 L25 47 L36 44" stroke="#8a9aa4" stroke-width="0.800" fill="none"/>
</svg>
<span id="t34" class="t" style="top:76.46px;letter-spacing:1.076px;font-size:16px;line-height:20px;left:305.4px;color:#0a246a;">Accommodation Search Results</span>
<span id="t35" class="t" style="top:96.46px;letter-spacing:0.773px;font-size:16px;line-height:20px;left:306.9px;color:#0a246a;">For pax: 2A, 3C, 0I</span>
<span id="t36" class="t" style="top:101.19px;letter-spacing:-0.122px;left:1158.9px;color:#fff;">More</span>
<span id="t37" class="t" style="top:100.19px;letter-spacing:-0.122px;left:1157.9px;color:#808080;">More</span>
<span id="t38" class="t" style="top:101.19px;letter-spacing:0.352px;left:1193.9px;color:#fff;">Stop</span>
<span id="t39" class="t" style="top:100.19px;letter-spacing:0.352px;left:1192.9px;color:#808080;">Stop</span>
<span id="t40" class="t" style="top:100.19px;letter-spacing:-0.063px;left:1225.9px;color:#000;">Erase Filtered Out</span>
<span id="t41" class="t" style="top:100.19px;letter-spacing:-0.131px;left:1323.9px;color:#000;">Facilities Filter</span>
<span id="t42" class="t" style="top:100.19px;letter-spacing:-0.087px;left:1409.9px;color:#000;">Basket</span>
<span id="t43" class="t" style="top:100.19px;letter-spacing:-0.011px;left:1452.9px;color:#000;">Nett Price</span>
<span id="t44" class="t" style="top:100.19px;letter-spacing:0.110px;left:1518.9px;color:#000;">Navigate</span>
<span id="t45" class="t" style="top:100.19px;letter-spacing:-0.231px;left:1572.9px;color:#000;">Close</span>
<div style="left:1401px;top:82px;width:1px;height:32px;background:#808080;"></div>
<div style="left:1402px;top:82px;width:1px;height:32px;background:#f4f4f8;"></div>
<div style="left:1510px;top:82px;width:1px;height:32px;background:#808080;"></div>
<div style="left:1511px;top:82px;width:1px;height:32px;background:#f4f4f8;"></div>
<svg style="left:1165px;top:86px" width="11" height="9" viewBox="0 0 11 9"><path d="M0 0 H11 L5.500 8 Z" fill="#808080"/></svg>
<div style="left:1200px;top:86px;width:8px;height:8px;background:#808080;"><div style="left:1px;top:1px;width:3px;height:2px;background:#c8c8c8"></div></div>
<svg style="left:1262px;top:82px" width="18" height="18" viewBox="0 0 18 18"><path d="M2.200 3.800 L3.200 16.300 Q9 17.300 14.800 16.300 L15.800 3.800 Z" fill="#92b6d8" stroke="#7a9ec6" stroke-width="0.800"/><path d="M3 4.500 L3.800 16 L5.300 16.300 L4.800 5 Z" fill="#c0d6ea"/><path d="M6.300 7 V15.500" stroke="#6a9ed0" stroke-width="1.300"/><path d="M2.200 5.200 Q9 7.200 15.800 5.200" stroke="#d4e6f4" stroke-width="1" fill="none"/><ellipse cx="9" cy="3.600" rx="6.900" ry="1.900" fill="#78a4ca" stroke="#c4daee" stroke-width="0.700"/><circle cx="12.600" cy="13" r="4.400" fill="#e02424"/><circle cx="12.600" cy="13" r="4.400" fill="none" stroke="#f4b0b0" stroke-width="0.500"/><rect x="10" y="12.300" width="5.200" height="1.500" fill="#fff"/></svg>
<svg style="left:1352px;top:84.5px" width="14" height="16" viewBox="0 0 14 16"><path d="M0.500 1.500 C0.500 0 13.500 0 13.500 1.500 L8 8.500 V14.500 L6 13 V8.500 Z" fill="#e4e4e8" stroke="#a8a8b0" stroke-width="0.800"/><ellipse cx="7" cy="1.800" rx="5.500" ry="1.100" fill="#c0c0c8"/><path d="M4 4 L6.500 8 V12" stroke="#fff" stroke-width="1" fill="none"/></svg>
<svg style="left:1418.5px;top:82.5px" width="16" height="17" viewBox="0 0 16 17"><path d="M0.500 3.500 H12 V9.500 H2.500 Z" fill="#e8e8ec" fill-opacity="0.500" stroke="#6a6a72" stroke-width="0.900"/><path d="M3.300 3.500 V9.500 M5.100 3.500 V9.500 M6.900 3.500 V9.500 M8.700 3.500 V9.500 M10.400 3.500 V9.500 M12 3.500 L12.800 0.600 H15.200 M2.500 9.500 L11 9.500 L10 12" stroke="#6a6a72" stroke-width="0.900" fill="none"/><path d="M4.200 14.300 H8" stroke="#e81818" stroke-width="0.900"/><circle cx="2.600" cy="14.300" r="1.650" fill="#fff" stroke="#e81818" stroke-width="1.100"/><circle cx="9.200" cy="14.300" r="1.650" fill="#fff" stroke="#e81818" stroke-width="1.100"/></svg>
<svg style="left:1469px;top:82px" width="18" height="18" viewBox="0 0 18 18"><text x="7" y="13.500" font-size="17" font-weight="bold" text-anchor="middle" fill="#78a818" font-family="Liberation Sans, sans-serif">$</text><ellipse cx="5" cy="5.500" rx="2" ry="2.600" fill="#c0e090" fill-opacity="0.800"/><rect x="2" y="11" width="4.500" height="3" fill="#ee1020"/><rect x="3" y="12" width="2" height="0.900" fill="#fbb"/><text x="11.800" y="15.800" font-size="13" font-weight="bold" text-anchor="middle" fill="#ee1020" stroke="#ee1020" stroke-width="0.600" font-family="Liberation Sans, sans-serif">%</text></svg>
<svg style="left:1532.5px;top:81.5px" width="18" height="19" viewBox="0 0 18 19"><circle cx="9" cy="9" r="6.800" fill="#f4f8ff" stroke="#8898b0" stroke-width="1.600"/><circle cx="9" cy="9" r="5" fill="none" stroke="#c8d4e4" stroke-width="0.800"/><path d="M5.500 4.500 L10.500 8 L8 10 Z" fill="#e03020"/><path d="M12.500 13.500 L7.500 10 L10 8 Z" fill="#2868d0"/><path d="M2 1 L5 4 M13.500 14.500 L16.500 17.500" stroke="#a06820" stroke-width="1.800"/><circle cx="3.500" cy="2.500" r="1.200" fill="#2060c0"/></svg>
<svg style="left:1581px;top:84.8px" width="13" height="13" viewBox="0 0 13 13"><path d="M2.200 0.400 L6.500 4.300 L10.800 0.400 L12.700 2.400 L8.700 6.500 L12.700 10.600 L10.800 12.600 L6.500 8.700 L2.200 12.600 L0.300 10.600 L4.300 6.500 L0.300 2.400 Z" fill="#f23038" stroke="#c01820" stroke-width="0.500"/><path d="M2.400 1.800 L6.500 5.600 L10.600 1.800" stroke="#fa7880" stroke-width="0.900" fill="none"/></svg>
<span id="t46" class="t b" style="top:135.19px;letter-spacing:0.548px;left:248.4px;">Search results: 8/8</span>
<div style="left:249px;top:151px;width:1361px;height:607px;border-top:1px solid #808080;border-left:1px solid #808080;border-right:1px solid #fff;border-bottom:1px solid #fff;background:#fff;"></div>
<div style="left:250px;top:152px;width:1359px;height:605px;border-top:1px solid #404040;border-left:1px solid #404040;border-right:1px solid #d4d0c8;border-bottom:1px solid #d4d0c8;background:#fff;"></div>
<div style="left:251px;top:153px;width:1357px;height:19px;background:#d4d0c8;border-top:2px solid #fff;border-bottom:1px solid #404040;"></div>
<div style="left:251px;top:170px;width:1357px;height:1px;background:#808080;"></div>
<div style="left:325px;top:154px;width:3px;height:17px;background:#fff;border-left:1px solid #808080;"><div style="left:0;top:0;width:1px;height:17px;background:#404040"></div></div>
<div style="left:445px;top:154px;width:3px;height:17px;background:#fff;border-left:1px solid #808080;"><div style="left:0;top:0;width:1px;height:17px;background:#404040"></div></div>
<div style="left:485px;top:154px;width:3px;height:17px;background:#fff;border-left:1px solid #808080;"><div style="left:0;top:0;width:1px;height:17px;background:#404040"></div></div>
<div style="left:560px;top:154px;width:3px;height:17px;background:#fff;border-left:1px solid #808080;"><div style="left:0;top:0;width:1px;height:17px;background:#404040"></div></div>
<div style="left:763px;top:154px;width:3px;height:17px;background:#fff;border-left:1px solid #808080;"><div style="left:0;top:0;width:1px;height:17px;background:#404040"></div></div>
<div style="left:798px;top:154px;width:3px;height:17px;background:#fff;border-left:1px solid #808080;"><div style="left:0;top:0;width:1px;height:17px;background:#404040"></div></div>
<div style="left:866px;top:154px;width:3px;height:17px;background:#fff;border-left:1px solid #808080;"><div style="left:0;top:0;width:1px;height:17px;background:#404040"></div></div>
<div style="left:901px;top:154px;width:3px;height:17px;background:#fff;border-left:1px solid #808080;"><div style="left:0;top:0;width:1px;height:17px;background:#404040"></div></div>
<div style="left:969px;top:154px;width:3px;height:17px;background:#fff;border-left:1px solid #808080;"><div style="left:0;top:0;width:1px;height:17px;background:#404040"></div></div>
<div style="left:1031px;top:154px;width:3px;height:17px;background:#fff;border-left:1px solid #808080;"><div style="left:0;top:0;width:1px;height:17px;background:#404040"></div></div>
<div style="left:1056px;top:154px;width:3px;height:17px;background:#fff;border-left:1px solid #808080;"><div style="left:0;top:0;width:1px;height:17px;background:#404040"></div></div>
<div style="left:1081px;top:154px;width:3px;height:17px;background:#fff;border-left:1px solid #808080;"><div style="left:0;top:0;width:1px;height:17px;background:#404040"></div></div>
<div style="left:1106px;top:154px;width:3px;height:17px;background:#fff;border-left:1px solid #808080;"><div style="left:0;top:0;width:1px;height:17px;background:#404040"></div></div>
<div style="left:1161px;top:154px;width:3px;height:17px;background:#fff;border-left:1px solid #808080;"><div style="left:0;top:0;width:1px;height:17px;background:#404040"></div></div>
<div style="left:1216px;top:154px;width:3px;height:17px;background:#fff;border-left:1px solid #808080;"><div style="left:0;top:0;width:1px;height:17px;background:#404040"></div></div>
<div style="left:1281px;top:154px;width:3px;height:17px;background:#fff;border-left:1px solid #808080;"><div style="left:0;top:0;width:1px;height:17px;background:#404040"></div></div>
<div style="left:1336px;top:154px;width:3px;height:17px;background:#fff;border-left:1px solid #808080;"><div style="left:0;top:0;width:1px;height:17px;background:#404040"></div></div>
<div style="left:1361px;top:154px;width:3px;height:17px;background:#fff;border-left:1px solid #808080;"><div style="left:0;top:0;width:1px;height:17px;background:#404040"></div></div>
<div style="left:1421px;top:154px;width:3px;height:17px;background:#fff;border-left:1px solid #808080;"><div style="left:0;top:0;width:1px;height:17px;background:#404040"></div></div>
<div style="left:1496px;top:154px;width:3px;height:17px;background:#fff;border-left:1px solid #808080;"><div style="left:0;top:0;width:1px;height:17px;background:#404040"></div></div>
<div style="left:251px;top:153px;width:2px;height:19px;background:#fff;"></div>
<span id="t47" class="t" style="top:156.19px;letter-spacing:0.059px;left:253.4px;">Resort</span>
<span id="t48" class="t" style="top:156.19px;letter-spacing:-0.265px;left:328.4px;">Accommodation</span>
<span id="t49" class="t" style="top:156.19px;letter-spacing:0.443px;left:448.2px;">Rati...</span>
<span id="t50" class="t" style="top:156.19px;letter-spacing:-0.115px;left:488.2px;">Board</span>
<span id="t51" class="t" style="top:156.19px;letter-spacing:-0.036px;left:563.2px;">Room type</span>
<span id="t52" class="t" style="top:156.19px;letter-spacing:-0.550px;left:766.2px;">DOW</span>
<span id="t53" class="t" style="top:156.19px;letter-spacing:-0.073px;left:801.2px;">Check In</span>
<span id="t54" class="t" style="top:156.19px;letter-spacing:-0.550px;left:869.2px;">DOW</span>
<span id="t55" class="t" style="top:156.19px;letter-spacing:-0.134px;left:904.2px;">Check Out</span>
<span id="t56" class="t" style="top:156.19px;letter-spacing:-0.209px;left:972.2px;">Supplier</span>
<span id="t57" class="t" style="top:156.19px;letter-spacing:0.191px;left:1038.4px;">Er</span>
<span id="t58" class="t" style="top:156.19px;letter-spacing:-0.550px;left:1061.4px;">NR</span>
<span id="t59" class="t" style="top:156.19px;letter-spacing:-0.550px;left:1086.4px;">MS</span>
<span id="t60" class="t" style="top:156.19px;letter-spacing:-0.200px;right:459.8px;">Price</span>
<span id="t61" class="t" style="top:156.19px;letter-spacing:-0.200px;right:404.3px;">Incl.Fl.PP</span>
<span id="t62" class="t" style="top:156.19px;letter-spacing:-0.200px;right:346.8px;">Basket</span>
<span id="t63" class="t" style="top:156.19px;letter-spacing:-0.200px;right:284.8px;">Discount</span>
<span id="t64" class="t" style="top:156.19px;letter-spacing:0.581px;left:1343.4px;">Of</span>
<span id="t65" class="t" style="top:156.19px;letter-spacing:0.088px;left:1364.2px;">Contract</span>
<span id="t66" class="t" style="top:156.19px;letter-spacing:-0.039px;left:1424.2px;">Act. Supplier</span>
<svg style="left:431px;top:157px" width="14" height="12" viewBox="0 0 14 12"><path d="M1 0.500 H13 L8 6 V11 L6 9.500 V6 Z" fill="#fff" stroke="#000" stroke-width="1"/></svg>
<svg style="left:1273px;top:160px" width="8" height="5" viewBox="0 0 8 5"><path d="M0 0 H8 L4 5 Z" fill="#808080"/></svg>
<div style="left:252px;top:172px;width:1356px;height:15px;background:#0a246a;"></div>
<span id="t67" class="t w" style="top:172.19px;letter-spacing:-0.116px;left:253.2px;">Lake Buena...</span>
<span id="t68" class="t w" style="top:172.19px;letter-spacing:-0.329px;left:328.2px;">Blue Tree Resort @ LBV</span>
<span id="t69" class="t w" style="top:172.19px;letter-spacing:0.198px;left:448.2px;">3.5</span>
<span id="t70" class="t w" style="top:172.19px;letter-spacing:-0.227px;left:488.2px;">Room Only</span>
<span id="t71" class="t w" style="top:172.19px;letter-spacing:-0.152px;left:563.2px;">2 Bedroom Suite (sleeps 6)</span>
<span id="t72" class="t w" style="top:172.19px;letter-spacing:0.173px;left:766.2px;">Tue</span>
<span id="t73" class="t w" style="top:172.19px;letter-spacing:0.193px;left:801.2px;">14/08/2018</span>
<span id="t74" class="t w" style="top:172.19px;letter-spacing:0.173px;left:869.2px;">Tue</span>
<span id="t75" class="t w" style="top:172.19px;letter-spacing:0.193px;left:904.2px;">28/08/2018</span>
<span id="t76" class="t w" style="top:172.19px;letter-spacing:0.024px;left:972.2px;">Ocean B...</span>
<span id="t77" class="t w" style="top:172.19px;letter-spacing:-0.051px;right:459.8px;">989.05</span>
<span id="t78" class="t w" style="top:172.19px;letter-spacing:-0.051px;right:404.8px;">197.81</span>
<span id="t79" class="t w" style="top:172.19px;letter-spacing:-0.051px;right:339.8px;">989.05</span>
<span id="t80" class="t w" style="top:172.19px;letter-spacing:-0.003px;right:284.8px;">0.00</span>
<span id="t81" class="t w" style="top:172.19px;letter-spacing:-0.550px;left:1364.2px;">XML</span>
<div style="left:252px;top:187px;width:1246px;height:14px;background:#bfe0ff;"></div>
<div style="left:252px;top:201px;width:1356px;height:1px;background:#d4d0c8;"></div>
<span id="t82" class="t" style="top:187.19px;letter-spacing:-0.116px;left:253.2px;">Lake Buena...</span>
<span id="t83" class="t" style="top:187.19px;letter-spacing:-0.090px;left:328.2px;">Blue Tree Resort</span>
<span id="t84" class="t" style="top:187.19px;letter-spacing:0.058px;left:448.2px;">4 Stars</span>
<span id="t85" class="t" style="top:187.19px;letter-spacing:-0.033px;left:488.2px;">Self Catering</span>
<span id="t86" class="t" style="top:187.19px;letter-spacing:-0.085px;left:563.2px;">Apartment Two Bedrooms</span>
<span id="t87" class="t" style="top:187.19px;letter-spacing:0.173px;left:766.2px;">Tue</span>
<span id="t88" class="t" style="top:187.19px;letter-spacing:0.193px;left:801.2px;">14/08/2018</span>
<span id="t89" class="t" style="top:187.19px;letter-spacing:0.173px;left:869.2px;">Tue</span>
<span id="t90" class="t" style="top:187.19px;letter-spacing:0.193px;left:904.2px;">28/08/2018</span>
<span id="t91" class="t" style="top:187.19px;letter-spacing:-0.079px;left:972.2px;">Hotelbeds</span>
<span id="t92" class="t" style="top:187.19px;letter-spacing:-0.003px;right:459.8px;">1,060.72</span>
<span id="t93" class="t" style="top:187.19px;letter-spacing:-0.051px;right:404.8px;">212.14</span>
<span id="t94" class="t" style="top:187.19px;letter-spacing:-0.003px;right:339.8px;">1,060.72</span>
<span id="t95" class="t" style="top:187.19px;letter-spacing:-0.003px;right:284.8px;">0.00</span>
<span id="t96" class="t" style="top:187.19px;letter-spacing:-0.550px;left:1364.2px;">XML</span>
<div style="left:252px;top:202px;width:1246px;height:14px;background:#bfe0ff;"></div>
<div style="left:252px;top:216px;width:1356px;height:1px;background:#d4d0c8;"></div>
<span id="t97" class="t" style="top:202.19px;letter-spacing:-0.150px;left:253.2px;">Orlando (FL)</span>
<span id="t98" class="t" style="top:202.19px;letter-spacing:-0.090px;left:328.2px;">Blue Tree Resort</span>
<span id="t99" class="t" style="top:202.19px;letter-spacing:0.308px;left:448.2px;">3star</span>
<span id="t100" class="t" style="top:202.19px;letter-spacing:-0.227px;left:488.2px;">Room Only</span>
<span id="t101" class="t" style="top:202.19px;letter-spacing:-0.102px;left:563.2px;">Two Bedroom Suite (quad)</span>
<span id="t102" class="t" style="top:202.19px;letter-spacing:0.173px;left:766.2px;">Tue</span>
<span id="t103" class="t" style="top:202.19px;letter-spacing:0.193px;left:801.2px;">14/08/2018</span>
<span id="t104" class="t" style="top:202.19px;letter-spacing:0.173px;left:869.2px;">Tue</span>
<span id="t105" class="t" style="top:202.19px;letter-spacing:0.193px;left:904.2px;">28/08/2018</span>
<span id="t106" class="t" style="top:202.19px;letter-spacing:-0.020px;left:972.2px;">Bonotel</span>
<span id="t107" class="t" style="top:202.19px;letter-spacing:-0.003px;right:459.8px;">1,424.30</span>
<span id="t108" class="t" style="top:202.19px;letter-spacing:-0.051px;right:404.8px;">284.86</span>
<span id="t109" class="t" style="top:202.19px;letter-spacing:-0.003px;right:339.8px;">1,424.30</span>
<span id="t110" class="t" style="top:202.19px;letter-spacing:-0.003px;right:284.8px;">0.00</span>
<span id="t111" class="t" style="top:202.19px;letter-spacing:-0.550px;left:1364.2px;">XML</span>
<div style="left:252px;top:217px;width:1246px;height:14px;background:#bfe0ff;"></div>
<div style="left:252px;top:231px;width:1356px;height:1px;background:#d4d0c8;"></div>
<span id="t112" class="t" style="top:217.19px;letter-spacing:-0.150px;left:253.2px;">Orlando (FL)</span>
<span id="t113" class="t" style="top:217.19px;letter-spacing:-0.090px;left:328.2px;">Blue Tree Resort</span>
<span id="t114" class="t" style="top:217.19px;letter-spacing:0.308px;left:448.2px;">3star</span>
<span id="t115" class="t" style="top:217.19px;letter-spacing:-0.227px;left:488.2px;">Room Only</span>
<span id="t116" class="t" style="top:217.19px;letter-spacing:-0.107px;left:563.2px;">Two Bedroom Suite (triple )</span>
<span id="t117" class="t" style="top:217.19px;letter-spacing:0.173px;left:766.2px;">Tue</span>
<span id="t118" class="t" style="top:217.19px;letter-spacing:0.193px;left:801.2px;">14/08/2018</span>
<span id="t119" class="t" style="top:217.19px;letter-spacing:0.173px;left:869.2px;">Tue</span>
<span id="t120" class="t" style="top:217.19px;letter-spacing:0.193px;left:904.2px;">28/08/2018</span>
<span id="t121" class="t" style="top:217.19px;letter-spacing:-0.020px;left:972.2px;">Bonotel</span>
<span id="t122" class="t" style="top:217.19px;letter-spacing:-0.003px;right:459.8px;">1,424.30</span>
<span id="t123" class="t" style="top:217.19px;letter-spacing:-0.051px;right:404.8px;">284.86</span>
<span id="t124" class="t" style="top:217.19px;letter-spacing:-0.003px;right:339.8px;">1,424.30</span>
<span id="t125" class="t" style="top:217.19px;letter-spacing:-0.003px;right:284.8px;">0.00</span>
<span id="t126" class="t" style="top:217.19px;letter-spacing:-0.550px;left:1364.2px;">XML</span>
<div style="left:252px;top:232px;width:1246px;height:14px;background:#bfe0ff;"></div>
<div style="left:252px;top:246px;width:1356px;height:1px;background:#d4d0c8;"></div>
<span id="t127" class="t" style="top:232.19px;letter-spacing:-0.150px;left:253.2px;">Orlando (FL)</span>
<span id="t128" class="t" style="top:232.19px;letter-spacing:-0.090px;left:328.2px;">Blue Tree Resort</span>
<span id="t129" class="t" style="top:232.19px;letter-spacing:0.308px;left:448.2px;">3star</span>
<span id="t130" class="t" style="top:232.19px;letter-spacing:-0.227px;left:488.2px;">Room Only</span>
<span id="t131" class="t" style="top:232.19px;letter-spacing:-0.164px;left:563.2px;">Two Bedroom Suite (double (family Plan))</span>
<span id="t132" class="t" style="top:232.19px;letter-spacing:0.173px;left:766.2px;">Tue</span>
<span id="t133" class="t" style="top:232.19px;letter-spacing:0.193px;left:801.2px;">14/08/2018</span>
<span id="t134" class="t" style="top:232.19px;letter-spacing:0.173px;left:869.2px;">Tue</span>
<span id="t135" class="t" style="top:232.19px;letter-spacing:0.193px;left:904.2px;">28/08/2018</span>
<span id="t136" class="t" style="top:232.19px;letter-spacing:-0.020px;left:972.2px;">Bonotel</span>
<span id="t137" class="t" style="top:232.19px;letter-spacing:-0.003px;right:459.8px;">1,424.30</span>
<span id="t138" class="t" style="top:232.19px;letter-spacing:-0.051px;right:404.8px;">284.86</span>
<span id="t139" class="t" style="top:232.19px;letter-spacing:-0.003px;right:339.8px;">1,424.30</span>
<span id="t140" class="t" style="top:232.19px;letter-spacing:-0.003px;right:284.8px;">0.00</span>
<span id="t141" class="t" style="top:232.19px;letter-spacing:-0.550px;left:1364.2px;">XML</span>
<div style="left:252px;top:247px;width:1246px;height:14px;background:#bfe0ff;"></div>
<div style="left:252px;top:261px;width:1356px;height:1px;background:#d4d0c8;"></div>
<span id="t142" class="t" style="top:247.19px;letter-spacing:-0.150px;left:253.2px;">Orlando (FL)</span>
<span id="t143" class="t" style="top:247.19px;letter-spacing:0.098px;left:328.2px;">Westgate Blue Tree ...</span>
<span id="t144" class="t" style="top:247.19px;letter-spacing:0.308px;left:448.2px;">3star</span>
<span id="t145" class="t" style="top:247.19px;letter-spacing:-0.227px;left:488.2px;">Room Only</span>
<span id="t146" class="t" style="top:247.19px;letter-spacing:-0.216px;left:563.2px;">Two Bedroom Villa (quad)</span>
<span id="t147" class="t" style="top:247.19px;letter-spacing:0.173px;left:766.2px;">Tue</span>
<span id="t148" class="t" style="top:247.19px;letter-spacing:0.193px;left:801.2px;">14/08/2018</span>
<span id="t149" class="t" style="top:247.19px;letter-spacing:0.173px;left:869.2px;">Tue</span>
<span id="t150" class="t" style="top:247.19px;letter-spacing:0.193px;left:904.2px;">28/08/2018</span>
<span id="t151" class="t" style="top:247.19px;letter-spacing:-0.020px;left:972.2px;">Bonotel</span>
<span id="t152" class="t" style="top:247.19px;letter-spacing:-0.003px;right:459.8px;">2,410.35</span>
<span id="t153" class="t" style="top:247.19px;letter-spacing:-0.051px;right:404.8px;">482.07</span>
<span id="t154" class="t" style="top:247.19px;letter-spacing:-0.003px;right:339.8px;">2,410.35</span>
<span id="t155" class="t" style="top:247.19px;letter-spacing:-0.003px;right:284.8px;">0.00</span>
<span id="t156" class="t" style="top:247.19px;letter-spacing:-0.550px;left:1364.2px;">XML</span>
<div style="left:252px;top:262px;width:1246px;height:14px;background:#bfe0ff;"></div>
<div style="left:252px;top:276px;width:1356px;height:1px;background:#d4d0c8;"></div>
<span id="t157" class="t" style="top:262.19px;letter-spacing:-0.150px;left:253.2px;">Orlando (FL)</span>
<span id="t158" class="t" style="top:262.19px;letter-spacing:0.098px;left:328.2px;">Westgate Blue Tree ...</span>
<span id="t159" class="t" style="top:262.19px;letter-spacing:0.308px;left:448.2px;">3star</span>
<span id="t160" class="t" style="top:262.19px;letter-spacing:-0.227px;left:488.2px;">Room Only</span>
<span id="t161" class="t" style="top:262.19px;letter-spacing:-0.198px;left:563.2px;">Two Bedroom Villa (double (family Plan))</span>
<span id="t162" class="t" style="top:262.19px;letter-spacing:0.173px;left:766.2px;">Tue</span>
<span id="t163" class="t" style="top:262.19px;letter-spacing:0.193px;left:801.2px;">14/08/2018</span>
<span id="t164" class="t" style="top:262.19px;letter-spacing:0.173px;left:869.2px;">Tue</span>
<span id="t165" class="t" style="top:262.19px;letter-spacing:0.193px;left:904.2px;">28/08/2018</span>
<span id="t166" class="t" style="top:262.19px;letter-spacing:-0.020px;left:972.2px;">Bonotel</span>
<span id="t167" class="t" style="top:262.19px;letter-spacing:-0.003px;right:459.8px;">2,410.35</span>
<span id="t168" class="t" style="top:262.19px;letter-spacing:-0.051px;right:404.8px;">482.07</span>
<span id="t169" class="t" style="top:262.19px;letter-spacing:-0.003px;right:339.8px;">2,410.35</span>
<span id="t170" class="t" style="top:262.19px;letter-spacing:-0.003px;right:284.8px;">0.00</span>
<span id="t171" class="t" style="top:262.19px;letter-spacing:-0.550px;left:1364.2px;">XML</span>
<div style="left:252px;top:277px;width:1246px;height:14px;background:#bfe0ff;"></div>
<div style="left:252px;top:291px;width:1356px;height:1px;background:#d4d0c8;"></div>
<span id="t172" class="t" style="top:277.19px;letter-spacing:-0.150px;left:253.2px;">Orlando (FL)</span>
<span id="t173" class="t" style="top:277.19px;letter-spacing:0.098px;left:328.2px;">Westgate Blue Tree ...</span>
<span id="t174" class="t" style="top:277.19px;letter-spacing:0.308px;left:448.2px;">3star</span>
<span id="t175" class="t" style="top:277.19px;letter-spacing:-0.227px;left:488.2px;">Room Only</span>
<span id="t176" class="t" style="top:277.19px;letter-spacing:-0.165px;left:563.2px;">Two Bedroom Villa (triple )</span>
<span id="t177" class="t" style="top:277.19px;letter-spacing:0.173px;left:766.2px;">Tue</span>
<span id="t178" class="t" style="top:277.19px;letter-spacing:0.193px;left:801.2px;">14/08/2018</span>
<span id="t179" class="t" style="top:277.19px;letter-spacing:0.173px;left:869.2px;">Tue</span>
<span id="t180" class="t" style="top:277.19px;letter-spacing:0.193px;left:904.2px;">28/08/2018</span>
<span id="t181" class="t" style="top:277.19px;letter-spacing:-0.020px;left:972.2px;">Bonotel</span>
<span id="t182" class="t" style="top:277.19px;letter-spacing:-0.003px;right:459.8px;">2,410.35</span>
<span id="t183" class="t" style="top:277.19px;letter-spacing:-0.051px;right:404.8px;">482.07</span>
<span id="t184" class="t" style="top:277.19px;letter-spacing:-0.003px;right:339.8px;">2,410.35</span>
<span id="t185" class="t" style="top:277.19px;letter-spacing:-0.003px;right:284.8px;">0.00</span>
<span id="t186" class="t" style="top:277.19px;letter-spacing:-0.550px;left:1364.2px;">XML</span>
<div style="left:326px;top:187px;width:1px;height:105px;background:#d4d0c8;"></div>
<div style="left:446px;top:187px;width:1px;height:105px;background:#d4d0c8;"></div>
<div style="left:486px;top:187px;width:1px;height:105px;background:#d4d0c8;"></div>
<div style="left:561px;top:187px;width:1px;height:105px;background:#d4d0c8;"></div>
<div style="left:764px;top:187px;width:1px;height:105px;background:#d4d0c8;"></div>
<div style="left:799px;top:187px;width:1px;height:105px;background:#d4d0c8;"></div>
<div style="left:867px;top:187px;width:1px;height:105px;background:#d4d0c8;"></div>
<div style="left:902px;top:187px;width:1px;height:105px;background:#d4d0c8;"></div>
<div style="left:970px;top:187px;width:1px;height:105px;background:#d4d0c8;"></div>
<div style="left:1032px;top:187px;width:1px;height:105px;background:#d4d0c8;"></div>
<div style="left:1057px;top:187px;width:1px;height:105px;background:#d4d0c8;"></div>
<div style="left:1082px;top:187px;width:1px;height:105px;background:#d4d0c8;"></div>
<div style="left:1107px;top:187px;width:1px;height:105px;background:#d4d0c8;"></div>
<div style="left:1162px;top:187px;width:1px;height:105px;background:#d4d0c8;"></div>
<div style="left:1217px;top:187px;width:1px;height:105px;background:#d4d0c8;"></div>
<div style="left:1282px;top:187px;width:1px;height:105px;background:#d4d0c8;"></div>
<div style="left:1337px;top:187px;width:1px;height:105px;background:#d4d0c8;"></div>
<div style="left:1362px;top:187px;width:1px;height:105px;background:#d4d0c8;"></div>
<div style="left:1422px;top:187px;width:1px;height:105px;background:#d4d0c8;"></div>
<div style="left:1497px;top:187px;width:1px;height:105px;background:#d4d0c8;"></div>
<span id="t187" class="t" style="top:782.19px;letter-spacing:0.041px;left:253.9px;">First portion: 7.0 sec, total search time: 18.8 sec</span>
<div style="left:1580px;top:778px;width:24px;height:23px;background:#d4d0c8;border-top:1px solid #fff;border-left:1px solid #fff;border-right:1px solid #404040;border-bottom:1px solid #404040;box-shadow:inset -1px -1px 0 #808080;"></div>
<span id="t188" class="t" style="top:781.11px;letter-spacing:0.000px;font-size:17px;line-height:18px;left:1588.4px;font-family:'Liberation Serif',serif;font-weight:bold;color:#1848a8;">i</span>
<div style="left:247px;top:805px;width:1366px;height:1px;background:#808080;"></div>
<div style="left:299px;top:806px;width:1px;height:17px;background:#808080;"></div>
<span id="t189" class="t" style="top:807.19px;letter-spacing:-0.479px;left:250.4px;color:#000;">Summary</span>
<div style="left:340px;top:806px;width:1px;height:17px;background:#808080;"></div>
<span id="t190" class="t" style="top:807.19px;letter-spacing:-0.231px;left:302.4px;color:#000;">Search</span>
<div style="left:341px;top:806px;width:122px;height:17px;background:#c8ffc0;"></div>
<div style="left:463px;top:806px;width:1px;height:17px;background:#808080;"></div>
<span id="t191" class="t" style="top:807.19px;letter-spacing:-0.450px;left:342.9px;color:#000;">Flt 2A,3C LHR MCO LHR</span>
<div style="left:464px;top:806px;width:82px;height:17px;background:#0a8a0a;"></div>
<div style="left:546px;top:806px;width:1px;height:17px;background:#808080;"></div>
<span id="t192" class="t" style="top:807.19px;letter-spacing:-0.374px;left:466.4px;color:#fff;">Acc 2A,3C MCO</span>
<div style="left:547px;top:806px;width:50px;height:17px;background:#c8ffc0;"></div>
<div style="left:597px;top:806px;width:1px;height:17px;background:#808080;"></div>
<span id="t193" class="t" style="top:807.19px;letter-spacing:-0.458px;left:549.9px;color:#000;">Car MCO</span>
<div style="left:598px;top:806px;width:62px;height:17px;background:#c8ffc0;"></div>
<div style="left:660px;top:806px;width:1px;height:17px;background:#808080;"></div>
<span id="t194" class="t" style="top:807.19px;letter-spacing:0.074px;left:600.9px;color:#000;">Tour 2A,3C</span>
<div style="left:756px;top:806px;width:1px;height:17px;background:#808080;"></div>
<span id="t195" class="t" style="top:807.19px;letter-spacing:-0.341px;left:663.9px;color:#000;">Financial Summary</span>
<span id="t196" class="t" style="top:831.19px;letter-spacing:-0.054px;left:812.9px;">User: 509 - Lauren Day</span>
<span id="t197" class="t" style="top:831.19px;letter-spacing:-0.072px;left:935.9px;">Retailer: 'Ocean-Florida'</span>
<span id="t198" class="t" style="top:831.19px;letter-spacing:0.044px;left:1061.9px;">Client: none</span>
<span id="t199" class="t" style="top:831.19px;letter-spacing:-0.104px;left:1557.9px;">15:12 GMT</span>
<div style="left:20px;top:857px;width:1599px;height:1px;background:#fff;"></div>
<div style="left:0px;top:859px;width:20px;height:40px;background:#2c1c44;"></div>
<div style="left:7px;top:861px;width:12px;height:38px;background:linear-gradient(135deg,#5a4a78 0%,#3c2c58 45%,#2c1c44 100%);border-left:1px solid #1a0c2c;"></div>
<div style="left:19px;top:859px;width:1px;height:40px;background:#1a0c2c;"></div>
<div style="left:22px;top:860px;width:52px;height:38px;background:#d4d0c8;border-top:1px solid #fff;border-left:1px solid #fff;border-right:1px solid #404040;border-bottom:1px solid #404040;box-shadow:inset -1px -1px 0 #808080;"></div>
<svg style="left:24px;top:869px" width="17" height="16" viewBox="0 0 17 16"><path d="M3 3 C5 1.500 7 2 9 3 L7.500 8.500 C5.500 7.500 3.500 7.300 1.500 8.500 Z" fill="#e8502a"/><path d="M10 3.300 C12 4.500 14 4.500 16.500 3 L15 8.500 C13 10 10.500 9.800 8.500 8.800 Z" fill="#6cbf3a"/><path d="M1.200 9.500 C3 8.300 5.200 8.500 7.200 9.500 L5.700 15 C3.700 14 1.700 14 -0.300 15.200 Z" fill="#3a8ee8"/><path d="M8.200 9.800 C10.200 10.800 12.700 11 14.700 9.500 L13.200 15 C11.200 16.500 8.700 16.200 6.700 15.200 Z" fill="#f8c020"/></svg>
<span id="t200" class="t b" style="top:872.19px;letter-spacing:1.284px;left:39.9px;">Start</span>
<div style="left:83px;top:860px;width:160px;height:38px;background:#fff;border-top:1px solid #404040;border-left:1px solid #404040;border-right:1px solid #fff;border-bottom:1px solid #fff;box-shadow:inset 1px 1px 0 #808080, inset -1px -1px 0 #d4d0c8;"></div>
<svg style="left:88px;top:869px" width="30" height="22" viewBox="0 0 30 22"><defs><linearGradient id="gl2" x1="0" y1="0" x2="1" y2="1"><stop offset="0" stop-color="#ffe040"/><stop offset="0.450" stop-color="#f5a01c"/><stop offset="1" stop-color="#a83808"/></linearGradient></defs><path d="M1 7 L6 1 L20 2.500 L29 5.500 L16 20 L11 18.500 Z" fill="url(#gl2)"/></svg>
<span id="t201" class="t b" style="top:872.19px;letter-spacing:0.591px;left:122.4px;">Interactive - Ocea...</span>
<div style="left:1428px;top:860px;width:189px;height:38px;border-top:1px solid #808080;border-left:1px solid #808080;border-right:1px solid #fff;border-bottom:1px solid #fff;"></div>
<svg style="left:1435px;top:871px" width="16" height="16" viewBox="0 0 16 16"><path d="M0 0 H8 V8 H0 Z" fill="#f0a020"/><path d="M8 0 H16 V8 H8 Z" fill="#2868c8"/><path d="M0 8 H8 V16 H0 Z" fill="#48a038"/><path d="M8 8 H16 V16 H8 Z" fill="#e03828"/><path d="M2 0 L8 8 L0 12 M8 8 L16 5 M8 8 L11 16" stroke="#d4d0c8" stroke-width="0.800" fill="none"/><path d="M0 0 L5 0 L8 8 L0 6 Z" fill="#f8c030" fill-opacity="0.700"/></svg>
<svg style="left:1459px;top:873px" width="17" height="11" viewBox="0 0 17 11"><rect x="0" y="2" width="13" height="6" fill="#48c828" stroke="#208010"/><rect x="3" y="8.500" width="7" height="2" fill="#d8c020"/><rect x="9" y="3" width="3" height="2" fill="#103008"/><path d="M14 0 V10 M14 1 H16.500 M14 4 H16" stroke="#202020" stroke-width="1.200"/></svg>
<svg style="left:1483px;top:871px" width="17" height="17" viewBox="0 0 17 17"><rect x="5.500" y="2.500" width="10.500" height="11" fill="#f4f4f4" stroke="#a0a0a0" stroke-width="0.700"/><rect x="7" y="4" width="7.500" height="8" fill="#a4a4a4"/><rect x="4.500" y="14.300" width="11" height="1.700" fill="#f4f4f4" stroke="#a0a0a0" stroke-width="0.500"/><path d="M1.500 0.500 V5.500 H6.500 V0.500 M4 5.500 V15" stroke="#909090" stroke-width="2.200" fill="none"/><path d="M1.500 0.500 V5.500 H6.500 V0.500 M4 5.500 V15" stroke="#fafafa" stroke-width="1.200" fill="none"/></svg>
<svg style="left:1507px;top:871px" width="17" height="17" viewBox="0 0 17 17"><path d="M0.500 5.500 H3 L7 1.500 V14.500 L3 10.500 H0.500 Z" fill="#e8e8e8" stroke="#909090" stroke-width="0.800"/><circle cx="11.500" cy="11" r="4.600" fill="#e82020" stroke="#fff" stroke-width="0.600"/><path d="M9.500 9 L13.500 13 M13.500 9 L9.500 13" stroke="#fff" stroke-width="1.600"/></svg>
<span id="t202" class="t" style="top:863.84px;letter-spacing:-0.458px;font-size:12px;left:1550.9px;">15:12</span>
<span id="t203" class="t" style="top:879.84px;letter-spacing:-0.485px;font-size:12px;left:1536.9px;">19/06/2017</span>
<svg style="left:1600px;top:873px" width="16" height="13" viewBox="0 0 16 13"><rect x="0.500" y="0.500" width="15" height="12" fill="#1858c8" stroke="#90b0e0"/><path d="M1 1 L15 1 L1 8 Z" fill="#3880e8"/><rect x="1" y="9.500" width="14" height="2.500" fill="#182848"/><circle cx="3" cy="10.500" r="1.200" fill="#f0c020"/></svg>
</body></html>
